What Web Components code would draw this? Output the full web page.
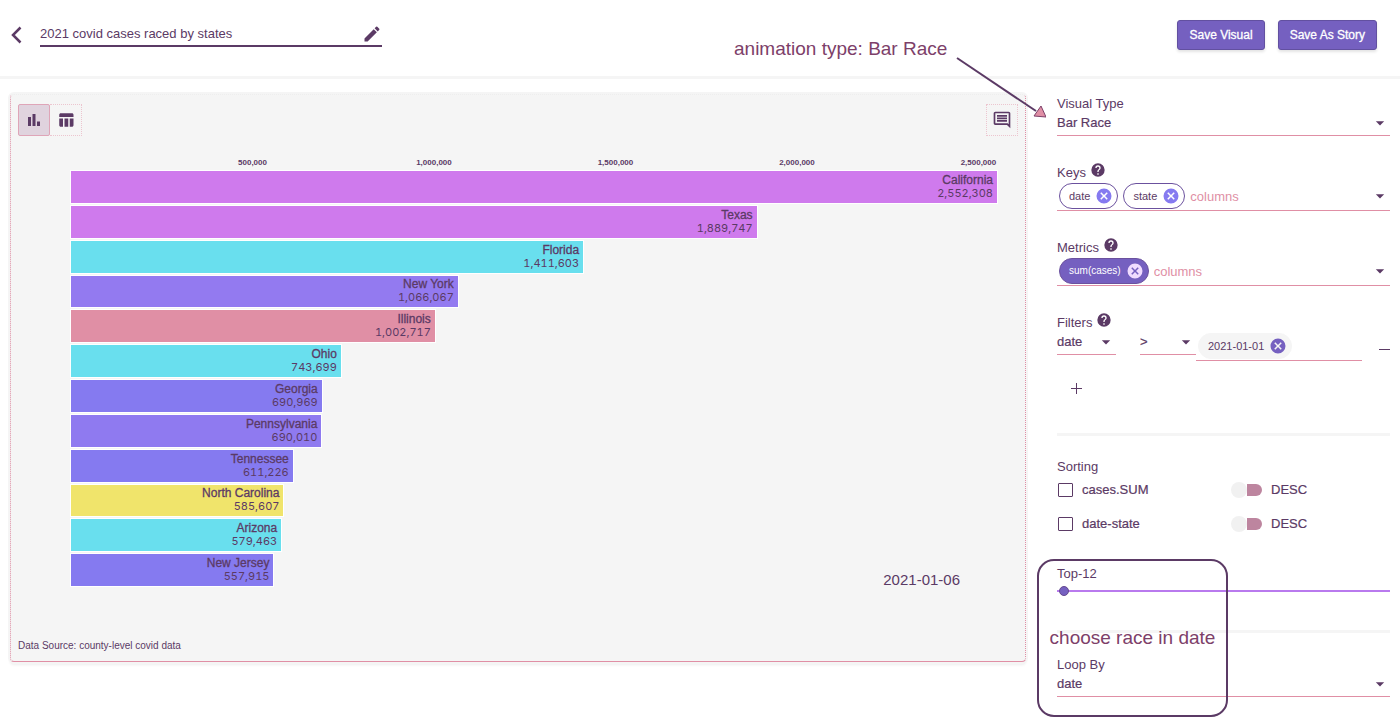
<!DOCTYPE html>
<html lang="en">
<head>
<meta charset="utf-8">
<title>2021 covid cases raced by states</title>
<style>
  :root {
    --ink: #5b3a65; --rose: #e08fa5; --indigo: #857af0; --deep: #7560c0; --marker: #7d4069;
    --violet: #cf7aed; --cyan: #69dfee; --lemon: #f0e46b; --mist: #f5f5f5;
  }
  body { margin: 0; min-height: 100vh; background: #fff; color: var(--ink); font: 13px/18px "Liberation Sans", Arial, sans-serif; }
</style>
</head>
<body>
<visual-editor></visual-editor>
<script>
const base = `*{box-sizing:border-box}
  button,input,select{font:inherit;color:inherit;margin:0;padding:0;border:0;background:none;outline:0;border-radius:0}
  button{cursor:pointer} svg{display:block;fill:currentColor}`;

function define(name, render) {
  customElements.define(name, class extends HTMLElement {
    connectedCallback() {
      if (this.shadowRoot) return;
      const t = document.createElement('template');
      t.innerHTML = render(this);
      this.attachShadow({ mode: 'open' }).append(t.content.cloneNode(true));
    }
  });
}

const paths = {
  pencil: 'M3 17.25V21h3.75L17.81 9.94l-3.75-3.75L3 17.25zM20.71 7.04c.39-.39.39-1.02 0-1.41l-2.34-2.34a1 1 0 0 0-1.41 0l-1.83 1.83 3.75 3.75 1.83-1.83z',
  bars: 'M4 8h4v12H4zM10 4h4v16h-4zM16 14h4v6h-4z',
  table: 'M10 10.02h5V21h-5V10.02zM17 21h3c1.1 0 2-.9 2-2v-9h-5v11zm3-18H5c-1.1 0-2 .9-2 2v3h19V5c0-1.1-.9-2-2-2zM3 19c0 1.1.9 2 2 2h3V10H3v9z',
  note: 'M21.99 4c0-1.1-.89-2-1.99-2H4c-1.1 0-2 .9-2 2v12c0 1.1.9 2 2 2h14l4 4-.01-18zM20 4v13.17L18.83 16H4V4h16zM6 12h12v2H6zm0-3h12v2H6zm0-3h12v2H6z',
  help: 'M12 2a10 10 0 1 0 0 20 10 10 0 0 0 0-20zm1 17h-2v-2h2v2zm2.07-7.75-.9.92C13.45 12.9 13 13.5 13 15h-2v-.5c0-1.1.45-2.1 1.17-2.83l1.24-1.26c.37-.36.59-.86.59-1.41a2 2 0 1 0-4 0H8a4 4 0 1 1 8 0c0 .88-.36 1.68-.93 2.25z',
  cancel: 'M12 2a10 10 0 1 0 0 20 10 10 0 0 0 0-20zm5 13.59L15.59 17 12 13.41 8.41 17 7 15.59 10.59 12 7 8.41 8.41 7 12 10.59 15.59 7 17 8.41 13.41 12 17 15.59z',
  caret: 'M7 10l5 5 5-5z'
};
define('app-icon', el => `<style>${base}:host{display:block;flex:none}</style>
  <svg viewBox="0 0 24 24" width="${el.getAttribute('size')}" height="${el.getAttribute('size')}" aria-hidden="true"><path d="${paths[el.getAttribute('name')]}"/></svg>`);

define('action-button', () => `<style>${base}
  :host{display:block}
  button{height:30px;padding:0 11px;border:1px solid #6250a0;border-radius:3px;background:var(--deep);color:#fff;
    font-size:12px;line-height:28px;-webkit-text-stroke:.3px #fff;box-shadow:0 2px 3px #e4e4e4;white-space:nowrap}
  </style><button type="button"><slot></slot></button>`);

define('page-header', () => `<style>${base}
  :host{display:flex;align-items:center;gap:13px;height:79px;padding:0 23px 7px 10px;border-bottom:3px solid var(--mist)}
  .back{width:17px;height:24px}
  .title{display:flex;align-items:center;width:342px;height:25px;border-bottom:2px solid var(--ink)}
  .title input{flex:1;min-width:0;height:24px}
  .space{flex:1}
  </style>
  <button class="back" aria-label="Back"><svg width="14" height="20" viewBox="0 0 14 20"><path d="M10.500 2.500 3 10l7.500 7.500" fill="none" stroke="currentColor" stroke-width="2.500"/></svg></button>
  <div class="title"><input aria-label="Visual name" value="2021 covid cases raced by states"><button aria-label="Edit name"><app-icon name="pencil" size="20"></app-icon></button></div>
  <div class="space"></div>
  <action-button>Save Visual</action-button><action-button>Save As Story</action-button>`);

define('chart-bar', el => `<style>${base}
  :host{display:flex;flex-direction:column;justify-content:center;align-items:flex-end;padding-right:4px;line-height:13px;
    white-space:nowrap;box-shadow:0 0 0 1px #fff;width:${el.getAttribute('value') / 25523.08}%;background:${el.getAttribute('color')}}
  b{font-size:12px;font-weight:400;-webkit-text-stroke:.3px var(--ink)}
  span{font-family:Inter,sans-serif;font-size:11px;font-variant-numeric:tabular-nums}
  </style><b><slot></slot></b><span>${Number(el.getAttribute('value')).toLocaleString('en-US')}</span>`);

const states = [
  ['California', 2552308, 'var(--violet)'], ['Texas', 1889747, 'var(--violet)'], ['Florida', 1411603, 'var(--cyan)'],
  ['New York', 1066067, '#937af0'], ['Illinois', 1002717, 'var(--rose)'], ['Ohio', 743699, 'var(--cyan)'],
  ['Georgia', 690969, 'var(--indigo)'], ['Pennsylvania', 690010, '#8f7af0'], ['Tennessee', 611226, 'var(--indigo)'],
  ['North Carolina', 585607, 'var(--lemon)'], ['Arizona', 579463, 'var(--cyan)'], ['New Jersey', 557915, 'var(--indigo)']
];
define('bar-race', () => `<style>${base}
  :host{display:block;position:relative}
  .axis{display:grid;grid-template-columns:repeat(5,19.6%);height:16px;font-size:8px;line-height:16px;font-weight:700}
  .axis span{justify-self:end;width:0;display:flex;justify-content:center}
  .plot{display:grid;grid-auto-rows:1fr;gap:3px;height:415px}
  time{position:absolute;right:37px;bottom:-4px;font-size:15px;line-height:20px}
  </style>
  <div class="axis">${[1, 2, 3, 4, 5].map(n => `<span>${(n * 500000).toLocaleString('en-US')}</span>`).join('')}</div>
  <div class="plot">${states.map(([n, v, c]) => `<chart-bar value="${v}" color="${c}">${n}</chart-bar>`).join('')}</div>
  <time>2021-01-06</time>`);

define('chart-card', () => `<style>${base}
  :host{display:block;padding:9px 7px 7px;border:1px dotted var(--rose);border-top-color:#eee;border-bottom-style:solid;
    border-radius:4px;background:var(--mist);box-shadow:0 0 0 2px var(--mist),0 3px 3px #eee}
  .tools{display:flex;justify-content:space-between;height:32px}
  .group{display:flex}
  button{width:32px;height:32px;display:grid;place-items:center;border:1px dotted #ecc5cf}
  button.on{background:#e0d3de;border:1px solid #dfa5b8;border-radius:2px}
  .group button + button{border-left:0}
  bar-race{margin:19px 21px 0 53px}
  footer{margin-top:52px;font-size:10px;line-height:16px}
  </style>
  <div class="tools"><div class="group">
    <button class="on" aria-label="Chart view"><app-icon name="bars" size="18"></app-icon></button>
    <button aria-label="Table view"><app-icon name="table" size="18"></app-icon></button></div>
    <button aria-label="Notes"><app-icon name="note" size="20"></app-icon></button></div>
  <bar-race></bar-race>
  <footer>Data Source: county-level covid data</footer>`);

define('select-field', el => `<style>${base}
  :host{display:block}
  label{display:block;height:18px}
  .box{display:flex;align-items:center;position:relative;border-bottom:1px solid var(--rose)}
  select{appearance:none;width:100%;height:22px;padding-bottom:2px;-webkit-text-stroke:.2px var(--ink)}
  app-icon{position:absolute;right:0;top:0;pointer-events:none}
  </style>
  ${el.hasAttribute('label') ? `<label for="s">${el.getAttribute('label')}</label>` : ''}
  <div class="box"><select id="s" aria-label="${el.getAttribute('label') || el.getAttribute('hint')}"><option>${el.getAttribute('value')}</option></select><app-icon name="caret" size="20"></app-icon></div>`);

define('value-chip', el => `<style>${base}
  :host{display:flex;align-items:center;gap:5px;height:26px;padding:0 4px 0 9px;border:1px solid #6b519e;border-radius:13px;
    font-size:11px;line-height:24px;white-space:nowrap}
  :host([kind=solid]){background:var(--deep);color:#fff;font-size:10px}
  :host([kind=solid]) button{color:#f0dcff}
  :host([kind=plain]){background:var(--mist);border-color:var(--mist)}
  button{color:var(--indigo)}
  :host([kind=plain]) button{color:var(--deep)}
  </style><span><slot></slot></span><button aria-label="Remove"><app-icon name="cancel" size="18"></app-icon></button>`);

define('chip-field', el => `<style>${base}
  :host{display:block}
  .head{display:flex;gap:4px;height:18px}
  .head app-icon{margin-top:-2px}
  .box{display:flex;align-items:center;gap:5px;height:29px;padding-left:2px;border-bottom:1px solid var(--rose)}
  input{flex:1;width:0;min-width:0;height:24px}
  input::placeholder{color:var(--rose);opacity:1}
  </style>
  ${el.hasAttribute('label') ? `<div class="head"><label for="i">${el.getAttribute('label')}</label><app-icon name="help" size="16"></app-icon></div>` : ''}
  <div class="box"><slot></slot><input id="i" aria-label="${el.getAttribute('label') || 'Filter value'}" placeholder="${el.getAttribute('placeholder') || ''}">
  ${el.hasAttribute('label') ? '<app-icon name="caret" size="20"></app-icon>' : ''}</div>`);

define('filter-editor', () => `<style>${base}
  :host{display:block}
  .head{display:flex;gap:4px;height:18px}
  .head app-icon{margin-top:-2px}
  .row{display:grid;grid-template-columns:59px 24px 56px minmax(0,1fr) 28px;align-items:start}
  .minus{display:grid;place-items:center end;height:34px}
  .plus{display:grid;place-items:center;width:24px;height:24px;margin:10px 7px 0}
  </style>
  <div class="head"><span>Filters</span><app-icon name="help" size="16"></app-icon></div>
  <div class="row">
    <select-field hint="Filter column" value="date"></select-field><span></span>
    <select-field hint="Operator" value="&gt;"></select-field>
    <chip-field><value-chip kind="plain">2021-01-01</value-chip></chip-field>
    <button class="minus" aria-label="Remove filter"><svg width="11" height="1"><path d="M0 0h11v1H0z"/></svg></button>
  </div>
  <button class="plus" aria-label="Add filter"><svg width="11" height="11"><path d="M5 0h1v5h5v1H6v5H5V6H0V5h5z"/></svg></button>`);

define('sort-row', el => `<style>${base}
  :host{display:grid;grid-template-columns:174px 1fr;align-items:center;height:34px}
  label{display:flex;align-items:center;-webkit-text-stroke:.2px var(--ink)}
  .tick{appearance:none;width:15px;height:14px;margin:0 9px 0 1px;border:1px solid var(--ink);border-radius:1px}
  .switch{appearance:none;display:flex;align-items:center;width:31px;height:16px;margin-right:9px}
  .switch::before{content:"";width:16px;height:16px;border-radius:8px;background:#f1f1f1}
  .switch::after{content:"";width:15px;height:12px;border-radius:0 6px 6px 0;background:#bd859f}
  </style><label><input class="tick" type="checkbox">${el.getAttribute('name')}</label>
  <label><input class="switch" type="checkbox" role="switch">DESC</label>`);

define('top-slider', () => `<style>${base}
  :host{display:block}
  label,input{display:block}
  input{appearance:none;width:100%;height:16px;background:linear-gradient(#b97aee,#b97aee) center/100% 2px no-repeat}
  input::-webkit-slider-thumb{appearance:none;width:10px;height:10px;border-radius:5px;background:var(--deep);border:1px solid #654a8f}
  </style><label for="r">Top-12</label><input id="r" type="range" min="1" max="1000" value="8">`);

define('type-callout', () => `<style>${base}
  :host{position:absolute;right:calc(100% + 11px);top:-56px;width:312px;height:80px;pointer-events:none;color:var(--marker)}
  span{font-size:19px;line-height:22px;white-space:nowrap}
  svg{position:absolute;right:0;bottom:0}
  </style><span>animation type: Bar Race</span>
  <svg width="90" height="62" viewBox="0 0 90 62"><path d="M1 2 80 55" fill="none" stroke="var(--ink)" stroke-width="2"/><path d="M90 61 78 60 85 50z" fill="var(--rose)" stroke="var(--marker)"/></svg>`);

define('loop-callout', () => `<style>${base}
  :host{box-sizing:border-box;position:absolute;left:-20px;top:-6px;width:191px;height:158px;border:2px solid var(--ink);border-radius:17px;
    pointer-events:none;display:grid;place-items:center;font-size:19px;line-height:22px;white-space:nowrap;color:var(--marker)}
  </style><span>choose race in date</span>`);

define('settings-panel', () => `<style>${base}
  :host{display:block;position:relative;padding-top:1px}
  chip-field,filter-editor{margin-top:28px}
  hr{height:3px;margin:0;border:0;background:var(--mist)}
  .first{margin-top:33px}
  .sorting{padding:22px 0 24px}
  .sorting div{height:15px}
  .loop{position:relative}
  .loop hr{margin:31px 0 23px}
  </style>
  <select-field label="Visual Type" value="Bar Race"></select-field>
  <chip-field label="Keys" placeholder="columns"><value-chip>date</value-chip><value-chip>state</value-chip></chip-field>
  <chip-field label="Metrics" placeholder="columns"><value-chip kind="solid">sum(cases)</value-chip></chip-field>
  <filter-editor></filter-editor>
  <hr class="first">
  <section class="sorting"><div>Sorting</div><sort-row name="cases.SUM"></sort-row><sort-row name="date-state"></sort-row></section>
  <section class="loop"><top-slider></top-slider><hr><select-field label="Loop By" value="date"></select-field><loop-callout></loop-callout></section>
  <type-callout></type-callout>`);

define('visual-editor', () => `<style>${base}
  :host{display:block}
  main{display:grid;grid-template-columns:minmax(0,1fr) 333px;gap:31px;align-items:start;padding:15px 10px}
  </style><page-header></page-header><main><chart-card></chart-card><settings-panel></settings-panel></main>`);
</script>
</body>
</html>
